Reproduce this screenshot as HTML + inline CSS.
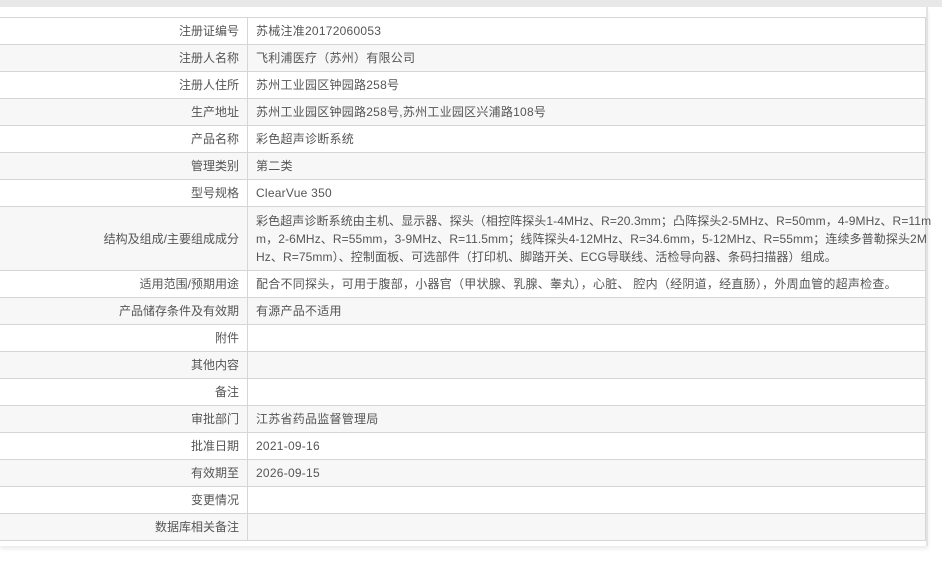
<!DOCTYPE html>
<html><head><meta charset="utf-8"><style>
html,body{margin:0;padding:0;width:942px;height:565px;overflow:hidden;background:#fff;font-family:"Liberation Sans","Noto Sans CJK SC",sans-serif;}
.top{position:absolute;left:0;top:0;width:942px;height:7px;background:#e8e8e8;}
.panel{position:absolute;left:0;top:7px;width:926px;height:539px;background:#fff;border-right:2px solid #e3e3e3;box-shadow:0 3px 4px rgba(0,0,0,0.08);}
table{position:absolute;left:-1px;top:17px;width:926px;border-collapse:collapse;table-layout:fixed;font-size:12px;color:#555;}
td{border:1px solid #d6d6d6;height:26px;padding:0;line-height:18px;vertical-align:middle;overflow:visible;}
td.l{text-align:right;padding-right:8px;}
td.v{padding-left:8px;padding-right:6px;letter-spacing:0.25px;}
tr.big td.v{letter-spacing:0.1px;}
tr:nth-child(even) td{background:#f7f7f7;}
tr.big td{height:63px;}
.n{white-space:nowrap}
</style></head><body>
<div class="top"></div>
<div class="panel"></div>
<table>
<colgroup><col style="width:248px"><col style="width:678px"></colgroup>
<tr><td class="l">注册证编号</td><td class="v">苏械注准20172060053</td></tr>
<tr><td class="l">注册人名称</td><td class="v">飞利浦医疗（苏州）有限公司</td></tr>
<tr><td class="l">注册人住所</td><td class="v">苏州工业园区钟园路258号</td></tr>
<tr><td class="l">生产地址</td><td class="v">苏州工业园区钟园路258号,苏州工业园区兴浦路108号</td></tr>
<tr><td class="l">产品名称</td><td class="v">彩色超声诊断系统</td></tr>
<tr><td class="l">管理类别</td><td class="v">第二类</td></tr>
<tr><td class="l">型号规格</td><td class="v">ClearVue 350</td></tr>
<tr class="big"><td class="l">结构及组成/主要组成成分</td><td class="v"><span class="n">彩色超声诊断系统由主机、显示器、探头（相控阵探头1-4MHz、R=20.3mm；凸阵探头2-5MHz、R=50mm，4-9MHz、R=11m</span><br><span class="n">m，2-6MHz、R=55mm，3-9MHz、R=11.5mm；线阵探头4-12MHz、R=34.6mm，5-12MHz、R=55mm；连续多普勒探头2M</span><br><span class="n">Hz、R=75mm）、控制面板、可选部件（打印机、脚踏开关、ECG导联线、活检导向器、条码扫描器）组成。</span></td></tr>
<tr><td class="l">适用范围/预期用途</td><td class="v"><span class="n">配合不同探头，可用于腹部，小器官（甲状腺、乳腺、睾丸），心脏、 腔内（经阴道，经直肠），外周血管的超声检查。</span></td></tr>
<tr><td class="l">产品储存条件及有效期</td><td class="v">有源产品不适用</td></tr>
<tr><td class="l">附件</td><td class="v"></td></tr>
<tr><td class="l">其他内容</td><td class="v"></td></tr>
<tr><td class="l">备注</td><td class="v"></td></tr>
<tr><td class="l">审批部门</td><td class="v">江苏省药品监督管理局</td></tr>
<tr><td class="l">批准日期</td><td class="v">2021-09-16</td></tr>
<tr><td class="l">有效期至</td><td class="v">2026-09-15</td></tr>
<tr><td class="l">变更情况</td><td class="v"></td></tr>
<tr><td class="l">数据库相关备注</td><td class="v"></td></tr>
</table>
</body></html>
